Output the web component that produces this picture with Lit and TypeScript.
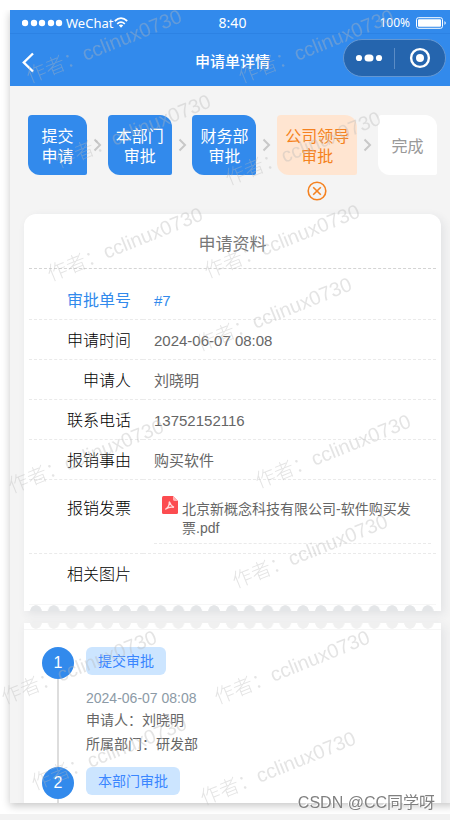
import { LitElement, html, css, svg, nothing } from "lit";
import { customElement } from "lit/decorators.js";
import { classMap } from "lit/directives/class-map.js";
import { styleMap } from "lit/directives/style-map.js";

interface Step {
  lines: string[];
  state: "done" | "rejected" | "pending";
}

interface Mark {
  x: number;
  y: number;
}

const steps: Step[] = [
  { lines: ["提交", "申请"], state: "done" },
  { lines: ["本部门", "审批"], state: "done" },
  { lines: ["财务部", "审批"], state: "done" },
  { lines: ["公司领导", "审批"], state: "rejected" },
  { lines: ["完成"], state: "pending" },
];

// Centres of the author marks scattered over the page
const marks: Mark[] = [
  { x: 104, y: 46 },
  { x: 316, y: 46 },
  { x: 133, y: 131 },
  { x: 303, y: 148 },
  { x: 125, y: 244 },
  { x: 282, y: 241 },
  { x: 274, y: 314 },
  { x: 86, y: 456 },
  { x: 333, y: 451 },
  { x: 310, y: 551 },
  { x: 79, y: 667 },
  { x: 292, y: 667 },
  { x: 109, y: 753 },
  { x: 278, y: 768 },
];

const chevron = svg`<path d="M1.5 1.5 L7 7 L1.5 12.5" fill="none" stroke="#c8c8c8" stroke-width="2"/>`;

@customElement("status-bar")
class StatusBar extends LitElement {
  static styles = css`
    :host {
      display: grid;
      grid-template-columns: 1fr auto 1fr;
      align-items: center;
      height: 24px;
      padding: 2px 8px 0;
      box-sizing: border-box;
      color: #fff;
      font-family: "Noto Sans", sans-serif;
      font-size: 13px;
      border-bottom: 1px solid #2c82e4;
    }
    .side {
      display: flex;
      align-items: center;
    }
    .dots {
      margin: 0 3px 0 4px;
    }
    .wifi {
      margin-left: 1px;
    }
    .time {
      font-size: 14px;
    }
    .end {
      justify-content: flex-end;
      gap: 6px;
      font-size: 12px;
    }
    svg {
      display: block;
    }
  `;

  render() {
    return html`
      <div class="side">
        <svg class="dots" width="41" height="8" viewBox="0 0 41 8" fill="#fff">
          ${[3, 12, 20, 29, 37].map((x) => svg`<circle cx=${x} cy="4" r="3.2"/>`)}
        </svg>
        <span>WeChat</span>
        <svg class="wifi" width="14" height="11" viewBox="0 0 14 11" fill="none" stroke="#fff" stroke-width="1.7">
          <path d="M0.8 4 Q7 -1.6 13.2 4" />
          <path d="M3.2 6.8 Q7 3.4 10.8 6.8" />
          <path d="M4.8 8.3 Q7 6.8 9.2 8.3 L7 10.8 Z" fill="#fff" stroke="none" />
        </svg>
      </div>
      <span class="time">8:40</span>
      <div class="side end">
        <span>100%</span>
        <svg width="31" height="12" viewBox="0 0 31 12">
          <rect x="0.5" y="0.7" width="26" height="10.6" rx="2" fill="none" stroke="#fff" />
          <rect x="2" y="2.2" width="23" height="7.6" rx="1" fill="#fff" />
          <path d="M28.5 4 Q31 6 28.5 8 Z" fill="#fff" />
        </svg>
      </div>
    `;
  }
}

@customElement("nav-bar")
class NavBar extends LitElement {
  static styles = css`
    :host {
      display: grid;
      grid-template-columns: 1fr auto 1fr;
      align-items: center;
      height: 52px;
      padding: 0 9px;
      box-sizing: border-box;
      color: #fff;
    }
    h1 {
      margin: 4px 0 0;
      font-size: 15px;
      font-weight: 500;
      line-height: 20px;
    }
    button {
      border: 0;
      padding: 0;
      background: none;
      cursor: pointer;
      display: flex;
      align-items: center;
      justify-content: center;
    }
    .back {
      justify-self: start;
      margin: 4px 0 0 3px;
    }
    .capsule {
      justify-self: end;
      display: flex;
      align-items: center;
      width: 103px;
      height: 38px;
      margin-bottom: 4px;
      box-sizing: border-box;
      border: 1px solid #6497d2;
      border-radius: 19px;
      background: #2565ae;
    }
    .capsule button {
      flex: 1;
      height: 100%;
    }
    .divider {
      width: 1px;
      height: 21px;
      background: #5b8cc5;
    }
  `;

  render() {
    return html`
      <button class="back" aria-label="返回">
        <svg width="13" height="21" viewBox="0 0 13 21">
          <path d="M11 1.5 L1.8 10.5 L11 19.5" fill="none" stroke="#fff" stroke-width="2.4" />
        </svg>
      </button>
      <h1>申请单详情</h1>
      <div class="capsule">
        <button aria-label="更多">
          <svg width="28" height="8" viewBox="0 0 28 8" fill="#fff">
            <circle cx="4" cy="4" r="3.1" />
            <rect x="9.5" y="0.5" width="9" height="7" rx="3.5" />
            <circle cx="24" cy="4" r="3.1" />
          </svg>
        </button>
        <span class="divider"></span>
        <button aria-label="关闭">
          <svg width="22" height="22" viewBox="0 0 22 22">
            <circle cx="11" cy="11" r="8.9" fill="none" stroke="#fff" stroke-width="2.4" />
            <circle cx="11" cy="11" r="4" fill="#fff" />
          </svg>
        </button>
      </div>
    `;
  }
}

@customElement("step-flow")
class StepFlow extends LitElement {
  static styles = css`
    :host {
      display: block;
      padding: 29px 18px 39px;
    }
    ol {
      display: flex;
      align-items: center;
      justify-content: space-between;
      margin: 0;
      padding: 0;
      list-style: none;
    }
    .step {
      position: relative;
      display: flex;
      flex-direction: column;
      align-items: center;
      justify-content: center;
      min-width: 59px;
      height: 60px;
      padding: 4px 8px 0;
      box-sizing: border-box;
      border-radius: 4px 12px 2px 12px;
      font-size: 16px;
      line-height: 20px;
      white-space: nowrap;
    }
    .done {
      background: #328aec;
      color: #fff;
    }
    .rejected {
      background: #ffe5d1;
      color: #f58220;
    }
    .pending {
      background: #fff;
      color: #999;
    }
    .arrow {
      display: flex;
    }
    .reject-icon {
      position: absolute;
      top: calc(100% + 6px);
      left: calc(50% - 10px);
    }
  `;

  render() {
    return html`
      <ol>
        ${steps.map(
          (step, i) => html`
            ${i
              ? html`<li class="arrow" aria-hidden="true">
                  <svg width="9" height="14" viewBox="0 0 9 14">${chevron}</svg>
                </li>`
              : nothing}
            <li class=${classMap({ step: true, [step.state]: true })}>
              ${step.lines.map((line) => html`<span>${line}</span>`)}
              ${step.state === "rejected"
                ? html`<svg class="reject-icon" width="20" height="20" viewBox="0 0 20 20" fill="none" stroke="#f58220" stroke-width="1.6">
                    <circle cx="10" cy="10" r="8.8" />
                    <path d="M6.2 6.2 L13.8 13.8 M13.8 6.2 L6.2 13.8" />
                  </svg>`
                : nothing}
            </li>
          `
        )}
      </ol>
    `;
  }
}

@customElement("form-card")
class FormCard extends LitElement {
  static styles = css`
    :host {
      display: block;
      margin: 0 14px;
      border-radius: 12px 12px 0 0;
      background: #fff;
      box-shadow: 3px 3px 10px rgba(40, 60, 80, 0.09);
    }
    h2 {
      margin: 0 5px;
      padding: 19px 0 11px;
      border-bottom: 1px dashed #d4d4d4;
      color: #777;
      font-size: 17px;
      font-weight: 400;
      line-height: 24px;
      text-align: center;
    }
    .body {
      padding: 11px 5px 0;
    }
    table {
      width: 100%;
      table-layout: fixed;
      border-collapse: separate;
      border-spacing: 0;
      font-size: 16px;
      line-height: 20px;
    }
    .name-col {
      width: 114px;
    }
    th,
    td {
      height: 40px;
      box-sizing: border-box;
      padding: 2px 12px 0;
      border-bottom: 1px dashed #eaeaea;
      font-weight: 300;
    }
    th {
      color: #000;
      text-align: right;
    }
    td {
      padding-left: 11px;
      color: #666;
      font-size: 15px;
      font-weight: 400;
    }
    .linked th,
    .linked td {
      color: #328aec;
      font-weight: 400;
    }
    .file-row th {
      padding-top: 19px;
      vertical-align: top;
    }
    .file-row td {
      padding: 15px 5px 9px 11px;
    }
    .last th,
    .last td {
      height: 51px;
      padding-top: 11px;
      border-bottom: 1px solid #f6f6f6;
      vertical-align: top;
    }
    .file {
      display: flex;
      align-items: flex-start;
      gap: 4px;
      padding: 0 8px 5px;
      border-bottom: 1px dashed #eaeaea;
      color: #666;
      font-size: 14px;
      line-height: 19px;
      text-decoration: none;
    }
    .file svg {
      flex: none;
      margin-top: 1px;
    }
    .name {
      padding-top: 5px;
    }
    .scallop {
      height: 6px;
      margin: 0 4px 0 3px;
      background-image: radial-gradient(circle 6px at 50% 100%, #e4e6e8 90%, #fff);
      background-size: 18px 6px;
      background-repeat: round no-repeat;
    }
  `;

  private rows = [
    { label: "审批单号", value: "#7", linked: true },
    { label: "申请时间", value: "2024-06-07 08:08", linked: false },
    { label: "申请人", value: "刘晓明", linked: false },
    { label: "联系电话", value: "13752152116", linked: false },
    { label: "报销事由", value: "购买软件", linked: false },
  ];

  render() {
    return html`
      <h2>申请资料</h2>
      <div class="body">
        <table>
          <colgroup>
            <col class="name-col" />
            <col />
          </colgroup>
          <tbody>
            ${this.rows.map(
              (row) => html`<tr class=${classMap({ linked: row.linked })}>
                <th scope="row">${row.label}</th>
                <td>${row.value}</td>
              </tr>`
            )}
            <tr class="file-row">
              <th scope="row">报销发票</th>
              <td>
                <a class="file" href="#invoice">
                  <svg width="16" height="18" viewBox="0 0 16 18">
                    <path d="M1.5 0 H11 L16 5 V16.5 Q16 18 14.5 18 H1.5 Q0 18 0 16.5 V1.5 Q0 0 1.5 0 Z" fill="#fc4c50" />
                    <path d="M11 0 V3.6 Q11 5 12.4 5 H16 Z" fill="#ffb4b5" />
                    <path d="M7.3 5.6 Q8.6 9.6 12 11.4 M12 11.4 Q7.6 10.4 3.8 13 Q7.6 10.6 7.3 5.6" fill="none" stroke="#ffdcdc" stroke-width="1.4" stroke-linejoin="round" />
                  </svg>
                  <span class="name">北京新概念科技有限公司-软件购买发票.pdf</span>
                </a>
              </td>
            </tr>
            <tr class="last">
              <th scope="row">相关图片</th>
              <td></td>
            </tr>
          </tbody>
        </table>
      </div>
      <div class="scallop"></div>
    `;
  }
}

@customElement("approval-log")
class ApprovalLog extends LitElement {
  static styles = css`
    :host {
      display: block;
      margin: 12px 14px 0;
      background: #fff;
      box-shadow: 3px 3px 10px rgba(40, 60, 80, 0.09);
    }
    .scallop {
      height: 6px;
      margin: 0 4px 0 3px;
      background-image: radial-gradient(circle 6px at 50% 0, #f0f0f0 90%, #fff);
      background-size: 18px 6px;
      background-repeat: round no-repeat;
    }
    ol {
      margin: 0;
      padding: 17px 18px 0;
      border-top: 1px solid #f6f6f6;
      list-style: none;
    }
    .entry {
      display: grid;
      grid-template-columns: 32px 1fr;
      column-gap: 12px;
    }
    .rail {
      display: flex;
      flex-direction: column;
      align-items: center;
    }
    .number {
      display: flex;
      align-items: center;
      justify-content: center;
      width: 32px;
      height: 32px;
      border-radius: 50%;
      background: #328aec;
      color: #fff;
      font-size: 16px;
    }
    .line {
      flex: 1;
      width: 2px;
      background: #ddd;
    }
    .content {
      padding-bottom: 11px;
      color: #666;
      font-size: 14px;
      line-height: 24px;
    }
    .tag {
      display: inline-block;
      margin-bottom: 13px;
      padding: 0 12px;
      border-radius: 6px;
      background: #cce5ff;
      color: #3a86ff;
      line-height: 28px;
      vertical-align: top;
    }
    time {
      display: block;
      color: #8c9aa6;
      line-height: 20px;
    }
  `;

  private entries = [
    {
      title: "提交审批",
      time: "2024-06-07 08:08",
      lines: ["申请人：刘晓明", "所属部门：研发部"],
    },
    { title: "本部门审批", time: "", lines: [] as string[] },
  ];

  render() {
    return html`
      <div class="scallop"></div>
      <ol>
        ${this.entries.map(
          (entry, i) => html`<li class="entry">
            <div class="rail">
              <span class="number">${i + 1}</span>
              <span class="line"></span>
            </div>
            <div class="content">
              <span class="tag">${entry.title}</span>
              ${entry.time ? html`<time>${entry.time}</time>` : nothing}
              ${entry.lines.map((line) => html`<div>${line}</div>`)}
            </div>
          </li>`
        )}
      </ol>
    `;
  }
}

@customElement("app-root")
class AppRoot extends LitElement {
  static styles = css`
    :host {
      position: relative;
      display: flex;
      flex-direction: column;
      height: 100vh;
      overflow: hidden;
      background: #fff;
      font-family: "Liberation Sans", "Noto Sans CJK SC", sans-serif;
    }
    .phone {
      flex: 1;
      min-height: 0;
      margin: 10px -5px 11px 10px;
      overflow-y: auto;
      scrollbar-width: none;
      background: #f4f4f4;
      box-shadow: 0 3px 8px rgba(0, 0, 0, 0.22);
    }
    header {
      background: #328aec;
    }
    .strip {
      flex: none;
      height: 6px;
      background: #f2f2f2;
    }
    .gutter {
      flex: none;
      height: 10px;
      margin-bottom: -10px;
      background: #fff;
      z-index: 1;
    }
    .marks {
      position: absolute;
      inset: 0;
      overflow: hidden;
      pointer-events: none;
    }
    .mark {
      position: absolute;
      color: rgba(185, 185, 185, 0.38);
      font-size: 20px;
      font-weight: 300;
      line-height: 24px;
      white-space: nowrap;
      transform: translate(-50%, -50%) rotate(-22deg);
    }
    .credit {
      position: absolute;
      right: 15px;
      bottom: 7px;
      color: #808080;
      font-size: 16px;
      line-height: 20px;
      text-shadow: -1px -1px 0 #fff;
    }
  `;

  render() {
    return html`
      <div class="gutter"></div>
      <main class="phone">
        <header>
          <status-bar></status-bar>
          <nav-bar></nav-bar>
        </header>
        <step-flow></step-flow>
        <form-card></form-card>
        <approval-log></approval-log>
      </main>
      <div class="strip"></div>
      <div class="marks">
        ${marks.map(
          (m) => html`<span class="mark" style=${styleMap({ left: `${m.x}px`, top: `${m.y}px` })}>作者：cclinux0730</span>`
        )}
      </div>
      <span class="credit">CSDN @CC同学呀</span>
    `;
  }
}
